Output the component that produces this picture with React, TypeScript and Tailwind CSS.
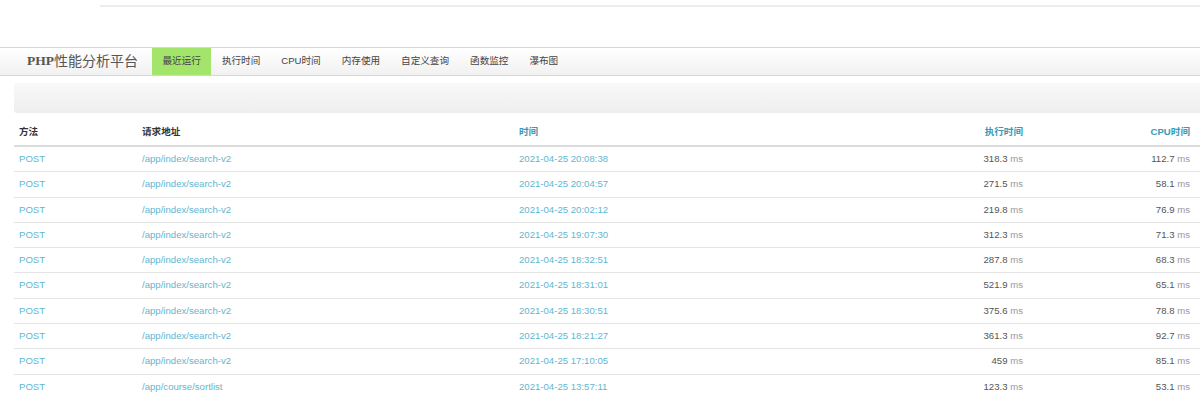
const NAV = ['执行时间', 'CPU时间', '内存使用', '自定义查询', '函数监控', '瀑布图'];

const ROWS: [string, string, string, string, string][] = [
  ['POST', '/app/index/search-v2', '2021-04-25 20:08:38', '318.3', '112.7'],
  ['POST', '/app/index/search-v2', '2021-04-25 20:04:57', '271.5', '58.1'],
  ['POST', '/app/index/search-v2', '2021-04-25 20:02:12', '219.8', '76.9'],
  ['POST', '/app/index/search-v2', '2021-04-25 19:07:30', '312.3', '71.3'],
  ['POST', '/app/index/search-v2', '2021-04-25 18:32:51', '287.8', '68.3'],
  ['POST', '/app/index/search-v2', '2021-04-25 18:31:01', '521.9', '65.1'],
  ['POST', '/app/index/search-v2', '2021-04-25 18:30:51', '375.6', '78.8'],
  ['POST', '/app/index/search-v2', '2021-04-25 18:21:27', '361.3', '92.7'],
  ['POST', '/app/index/search-v2', '2021-04-25 17:10:05', '459', '85.1'],
  ['POST', '/app/course/sortlist', '2021-04-25 13:57:11', '123.3', '53.1'],
];

const font = 'font-["Liberation_Sans","Noto_Sans_CJK_SC",sans-serif]';
const cols = 'grid grid-cols-[123px_377px_300px_219px_167px]';

function Ms({ v }: { v: string }) {
  return (
    <span className="text-[#555]">
      {v} <span className="text-[#999]">ms</span>
    </span>
  );
}

export default function App() {
  return (
    <div className={`${font} w-[1200px] h-[394px] overflow-hidden bg-white`}>
      <div className="h-[5px]" />
      <div className="ml-[100px] h-[2px] bg-[#ececec]" />

      {/* navbar */}
      <div className="mt-[40px] h-[29px] border-y border-[#d6d6d6] bg-gradient-to-b from-white to-[#f1f1f1] flex items-stretch">
        <div className="pl-[27px] w-[152px] flex items-center text-[#555]">
          <span className='font-["Liberation_Serif",serif] font-bold text-[13.5px]'>PHP</span>
          <span className="text-[14px]">性能分析平台</span>
        </div>
        <div className="bg-[#a3e46b] px-[10.5px] flex items-center text-[9.6px] text-[#444]">最近运行</div>
        {NAV.map((n) => (
          <div key={n} className="px-[10.5px] flex items-center text-[9.6px] text-[#444]">
            {n}
          </div>
        ))}
      </div>

      {/* jumbotron */}
      <div className="ml-[14px] mt-[7px] h-[30px] rounded-l-[3px] bg-gradient-to-b from-[#f9f9f9] to-[#eeeeee]" />

      {/* table */}
      <div className="ml-[14px] text-[9.6px]">
        <div className={`${cols} h-[34px] items-center pt-[6px] border-b-2 border-[#dcdcdc] font-bold`}>
          <div className="px-[5px] text-[#333]">方法</div>
          <div className="px-[5px] text-[#333]">请求地址</div>
          <div className="px-[5px] text-[#3a9ab5]">时间</div>
          <div className="pr-[10px] text-right text-[#3a9ab5]">执行时间</div>
          <div className="pr-[10px] text-right text-[#3a9ab5]">CPU时间</div>
        </div>
        {ROWS.map((r, i) => (
          <div key={i} className={`${cols} h-[25.3px] items-center border-b border-[#e4e4e4]`}>
            <div className="px-[5px] text-[#62b6d0]">{r[0]}</div>
            <div className="px-[5px] text-[#62b6d0]">{r[1]}</div>
            <div className="px-[5px] text-[#62b6d0]">{r[2]}</div>
            <div className="pr-[10px] text-right"><Ms v={r[3]} /></div>
            <div className="pr-[10px] text-right"><Ms v={r[4]} /></div>
          </div>
        ))}
      </div>
    </div>
  );
}
